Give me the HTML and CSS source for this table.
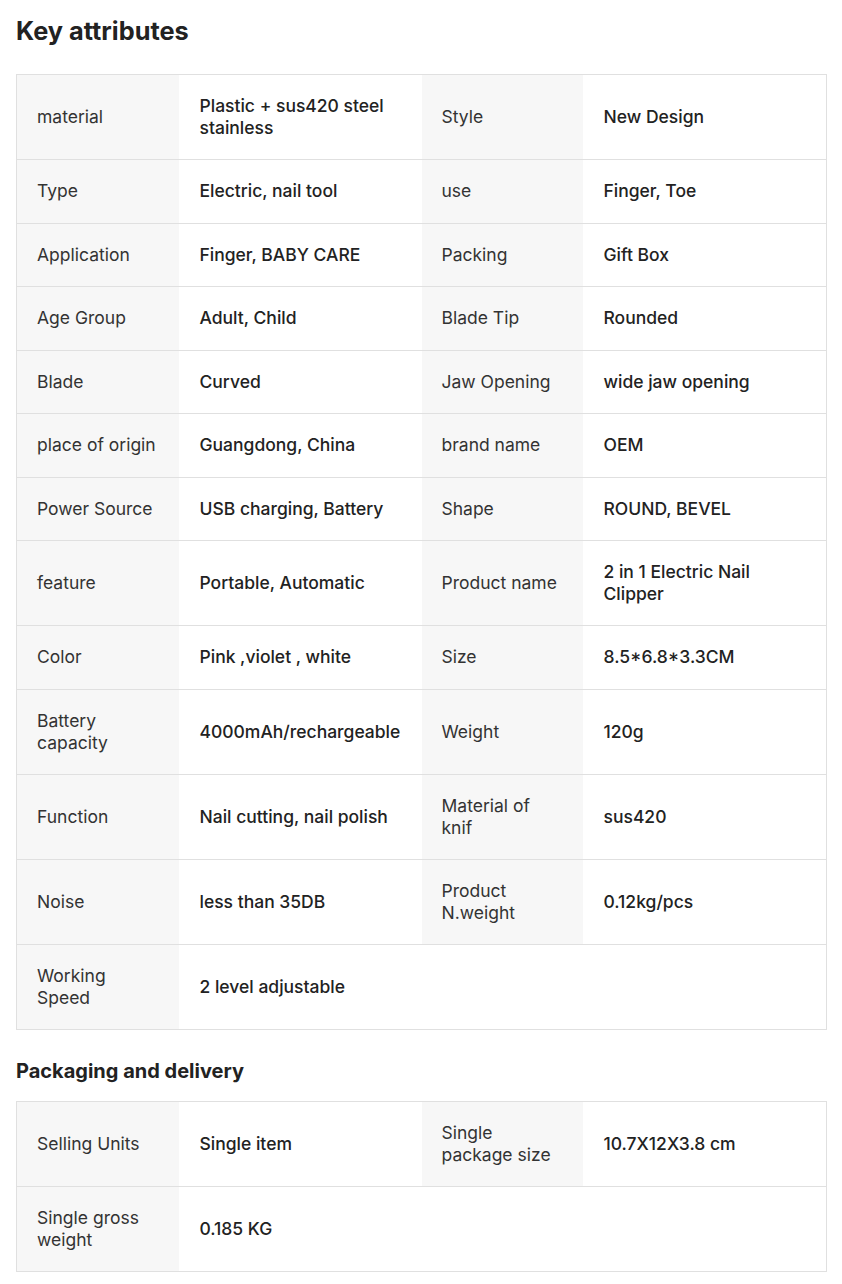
FILE: index.html
```html
<!DOCTYPE html>
<html lang="en">
<head>
<meta charset="utf-8">
<title>Key attributes</title>
<link rel="stylesheet" href="styles.css">
</head>
<body>
<div class="page">
  <h1 class="title">Key attributes</h1>
  <table class="attrs">
    <colgroup><col class="c1"><col class="c2"><col class="c3"><col class="c4"></colgroup>
    <tr><td class="lbl">material</td><td class="val">Plastic + sus420 steel stainless</td><td class="lbl">Style</td><td class="val">New Design</td></tr>
    <tr><td class="lbl">Type</td><td class="val">Electric, nail tool</td><td class="lbl">use</td><td class="val">Finger, Toe</td></tr>
    <tr><td class="lbl">Application</td><td class="val">Finger, BABY CARE</td><td class="lbl">Packing</td><td class="val">Gift Box</td></tr>
    <tr><td class="lbl">Age Group</td><td class="val">Adult, Child</td><td class="lbl">Blade Tip</td><td class="val">Rounded</td></tr>
    <tr><td class="lbl">Blade</td><td class="val">Curved</td><td class="lbl">Jaw Opening</td><td class="val">wide jaw opening</td></tr>
    <tr><td class="lbl">place of origin</td><td class="val">Guangdong, China</td><td class="lbl">brand name</td><td class="val">OEM</td></tr>
    <tr><td class="lbl">Power Source</td><td class="val">USB charging, Battery</td><td class="lbl">Shape</td><td class="val">ROUND, BEVEL</td></tr>
    <tr><td class="lbl">feature</td><td class="val">Portable, Automatic</td><td class="lbl">Product name</td><td class="val">2 in 1 Electric Nail Clipper</td></tr>
    <tr><td class="lbl">Color</td><td class="val">Pink ,violet , white</td><td class="lbl">Size</td><td class="val">8.5*6.8*3.3CM</td></tr>
    <tr><td class="lbl">Battery capacity</td><td class="val">4000mAh/rechargeable</td><td class="lbl">Weight</td><td class="val">120g</td></tr>
    <tr><td class="lbl">Function</td><td class="val">Nail cutting, nail polish</td><td class="lbl">Material of knif</td><td class="val">sus420</td></tr>
    <tr><td class="lbl">Noise</td><td class="val">less than 35DB</td><td class="lbl">Product N.weight</td><td class="val">0.12kg/pcs</td></tr>
    <tr><td class="lbl">Working Speed</td><td class="val" colspan="3">2 level adjustable</td></tr>
  </table>

  <h2 class="subtitle">Packaging and delivery</h2>
  <table class="attrs">
    <colgroup><col class="c1"><col class="c2"><col class="c3"><col class="c4"></colgroup>
    <tr><td class="lbl">Selling Units</td><td class="val">Single item</td><td class="lbl">Single package size</td><td class="val">10.7X12X3.8 cm</td></tr>
    <tr><td class="lbl">Single gross weight</td><td class="val" colspan="3">0.185 KG</td></tr>
  </table>
</div>
</body>
</html>
```

FILE: styles.css
```css
html, body {
  margin: 0;
  padding: 0;
  background: #ffffff;
}
body {
  font-family: Inter, "Liberation Sans", Arial, sans-serif;
  color: #222222;
}
.page {
  padding: 15px 16px 0 16px;
}
.title {
  margin: 0 0 27px 0;
  font-size: 25.3px;
  line-height: 32px;
  font-weight: 700;
  color: #222222;
}
.subtitle {
  margin: 27px 0 16px 0;
  font-size: 20px;
  line-height: 28px;
  font-weight: 700;
  color: #222222;
}
.attrs {
  width: 810px;
  border-collapse: collapse;
  table-layout: fixed;
  border: 1px solid #e0e0e0;
}
.c1 { width: 162px; }
.c2 { width: 243px; }
.c3 { width: 161px; }
.c4 { width: 244px; }
.attrs td {
  border-top: 1px solid #e0e0e0;
  padding: 20px 20px 20px 20px;
  font-size: 17.5px;
  line-height: 22px;
  height: 22.5px;
  vertical-align: middle;
  text-align: left;
}
.attrs .lbl {
  background: #f7f7f7;
  color: #333333;
  font-weight: 400;
}
.attrs .val {
  background: #ffffff;
  color: #222222;
  font-weight: 500;
  padding-left: 21px;
}
```
